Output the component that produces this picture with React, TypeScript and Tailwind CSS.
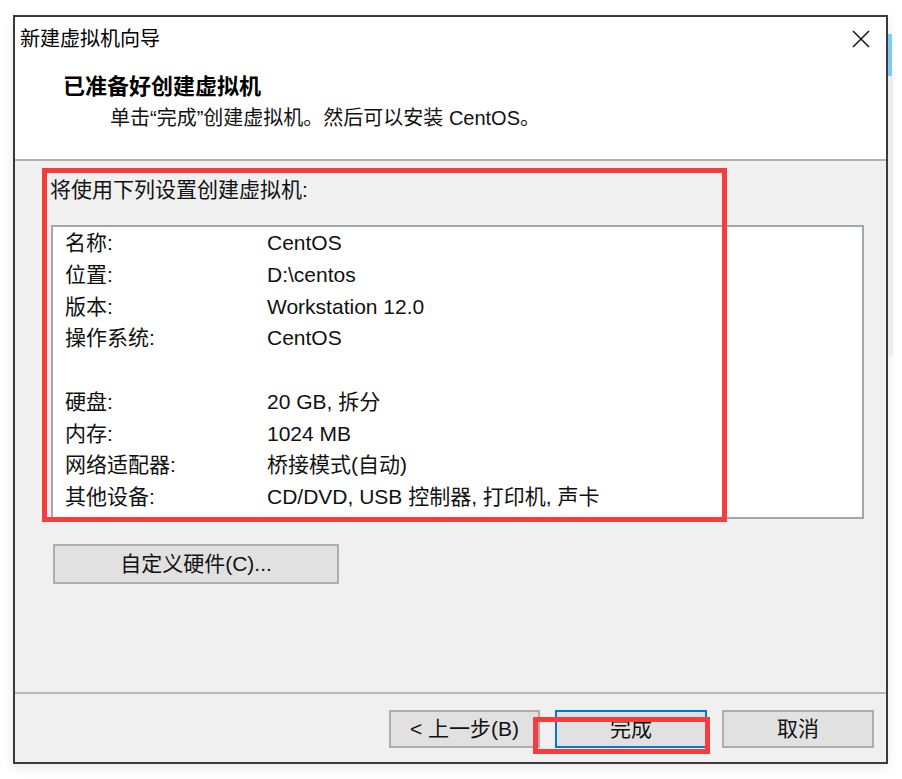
import React from "react";

const FONT = {
  fontFamily: '"Liberation Sans", "Noto Sans CJK SC", sans-serif',
};

const rows: [string, string][] = [
  ["名称:", "CentOS"],
  ["位置:", "D:\\centos"],
  ["版本:", "Workstation 12.0"],
  ["操作系统:", "CentOS"],
  ["", ""],
  ["硬盘:", "20 GB, 拆分"],
  ["内存:", "1024 MB"],
  ["网络适配器:", "桥接模式(自动)"],
  ["其他设备:", "CD/DVD, USB 控制器, 打印机, 声卡"],
];

function Btn({ children, w, primary }: { children: React.ReactNode; w: string; primary?: boolean }) {
  return (
    <div
      className={`${w} h-[38px] flex items-center justify-center bg-[#e1e1e1] text-[21px] text-[#111] ${
        primary ? "border-2 border-[#0078d7]" : "border-2 border-[#adadad]"
      }`}
    >
      {children}
    </div>
  );
}

export default function App() {
  return (
    <div className="relative w-[902px] h-[779px] bg-white overflow-hidden" style={FONT}>
      {/* background window edge */}
      <div className="absolute left-[888px] top-[34px] w-[4px] h-[42px] bg-[#7ccbf0]" />
      <div className="absolute left-[888px] top-[76px] w-[5px] h-[280px] bg-[#ededed]" />

      <div className="pl-[13px] pt-[15px]">
        <div className="w-[875px] h-[749px] border-2 border-[#3a3a3a] flex flex-col bg-[#f0f0f0] shadow-[0_4px_10px_rgba(60,80,110,0.12)]">
          {/* title bar + header */}
          <div className="bg-white">
            <div className="h-[44px] flex items-center justify-between pl-[5px] pr-[16px]">
              <span className="text-[20px] text-black">新建虚拟机向导</span>
              <svg width="18" height="18" viewBox="0 0 18 18">
                <path d="M1 1 L17 17 M17 1 L1 17" stroke="#1a1a1a" strokeWidth="1.6" />
              </svg>
            </div>
            <div className="h-[98px] pl-[48px] pt-[12px]">
              <div className="text-[22px] font-bold leading-[28px] text-black">已准备好创建虚拟机</div>
              <div className="mt-[3px] pl-[47px] text-[20px] leading-[28px] text-[#111]">
                单击“完成”创建虚拟机。然后可以安装 CentOS。
              </div>
            </div>
          </div>
          <div className="h-[2px] bg-[#b2b2b2]" />

          {/* body */}
          <div className="h-[531px] pt-[15px]">
            <div className="pl-[35px] text-[21px] leading-[28px] text-[#111]">将使用下列设置创建虚拟机:</div>
            <div className="ml-[36px] mt-[21px] w-[813px] h-[294px] border-2 border-[#a3a6ab] bg-white">
              {rows.map(([k, v], i) => (
                <div key={i} className="grid grid-cols-[202px_1fr] pl-[12px] h-[31.75px] items-center text-[21px] leading-[31.75px] text-[#111]">
                  <span>{k}</span>
                  <span>{v}</span>
                </div>
              ))}
            </div>
            <div className="ml-[38px] mt-[25px]">
              <Btn w="w-[286px] !h-[40px]">自定义硬件(C)...</Btn>
            </div>
          </div>

          <div className="h-[2px] bg-[#b8b8b8]" />
          {/* footer */}
          <div className="flex-1 flex justify-end items-start pt-[16px] pr-[12px] gap-[15px]">
            <Btn w="w-[151px]">&lt; 上一步(B)</Btn>
            <Btn w="w-[152px]" primary>
              完成
            </Btn>
            <Btn w="w-[152px]">取消</Btn>
          </div>
        </div>
      </div>

      {/* red annotation boxes */}
      <div className="absolute left-[42px] top-[168px] w-[685px] h-[354px] border-[5px] border-[#f63c3c]" />
      <div className="absolute left-[533px] top-[717px] w-[177px] h-[37px] border-[5px] border-[#f63c3c]" />
    </div>
  );
}
